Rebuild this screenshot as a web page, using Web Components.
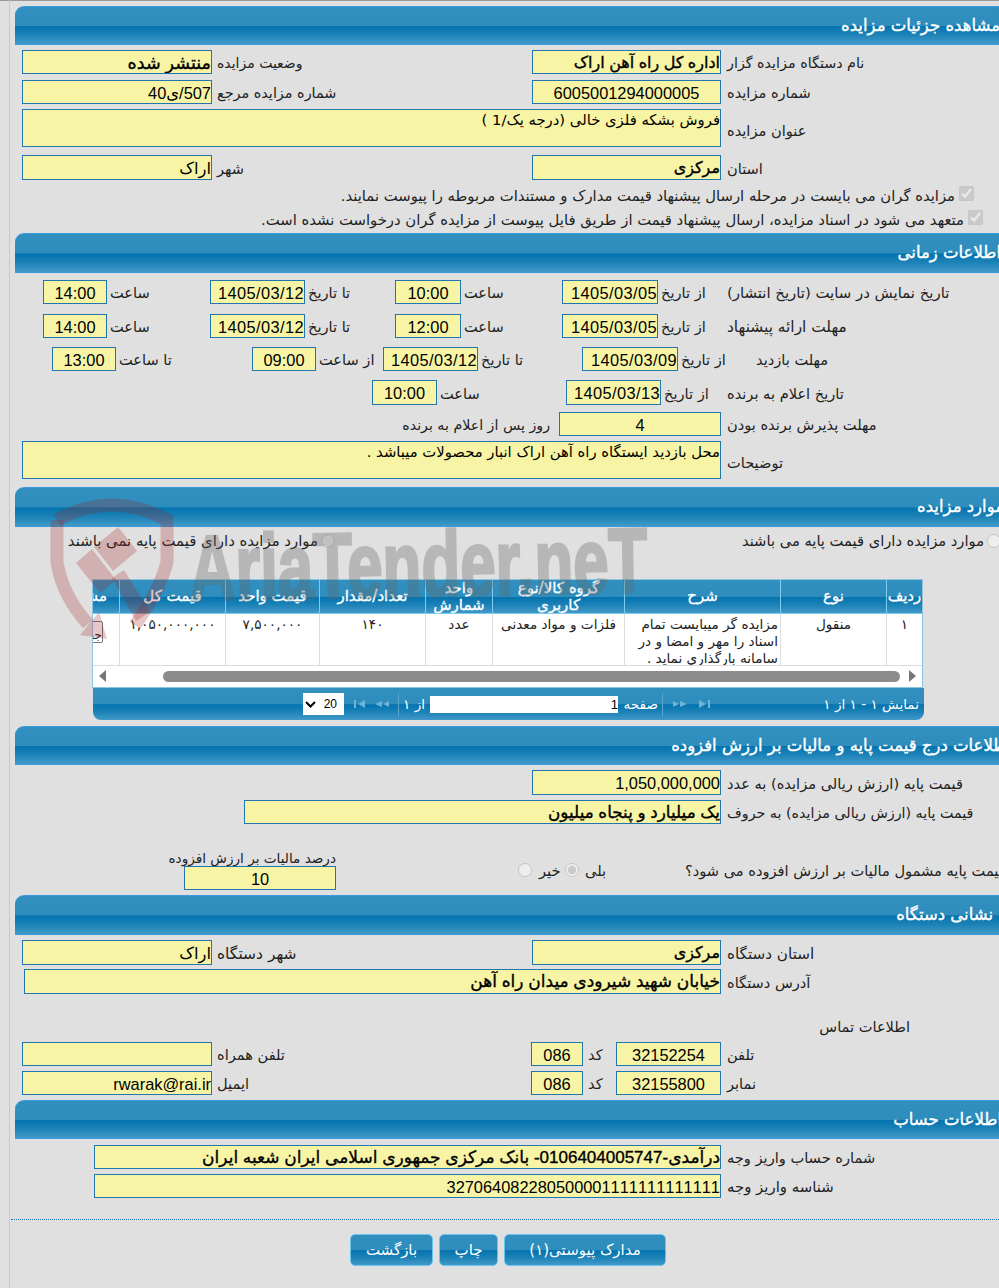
<!DOCTYPE html>
<html lang="fa">
<head>
<meta charset="utf-8">
<title>مشاهده جزئیات مزایده</title>
<style>
html, body { margin: 0; padding: 0; background: #e0e0e0; }
body { width: 999px; height: 1288px; overflow: hidden; }
</style>
</head>
<body>
<aria-sheet>
  <section-bar style="margin-top:5px;padding-right:15px">مشاهده جزئیات مزایده</section-bar>

  <field-row cols="294 189 320 190" h="24" style="margin-top:5px">
    <field-text style="font-size:14.3px">نام دستگاه مزایده گزار</field-text><field-box bold style="font-size:16px">اداره کل راه آهن اراک</field-box>
    <field-text near style="font-size:14px">وضعیت مزایده</field-text><field-box bold style="font-size:17.6px">منتشر شده</field-box>
  </field-row>
  <field-row cols="294 189 320 190" h="24" style="margin-top:6px">
    <field-text>شماره مزایده</field-text><field-box center>6005001294000005</field-box>
    <field-text near style="font-size:14.4px">شماره مزایده مرجع</field-text><field-box>507/ی40</field-box>
  </field-row>
  <field-row cols="294 699" h="38" style="margin-top:5px">
    <field-text low>عنوان مزایده</field-text><field-box top>فروش بشکه فلزی خالی (درجه یک/1 )</field-box>
  </field-row>
  <field-row cols="294 189 320 190" h="25" style="margin-top:8px">
    <field-text>استان</field-text><field-box bold style="font-size:16px">مرکزی</field-box>
    <field-text near>شهر</field-text><field-box>اراک</field-box>
  </field-row>
  <check-line inset="41" style="margin-top:6px">مزایده گران می بایست در مرحله ارسال پیشنهاد قیمت مدارک و مستندات مربوطه را پیوست نمایند.</check-line>
  <check-line inset="32" style="margin-top:4px">متعهد می شود در اسناد مزایده، ارسال پیشنهاد قیمت از طریق فایل پیوست از مزایده گران درخواست نشده است.</check-line>

  <section-bar style="margin-top:3px;height:40px;padding-right:14px">اطلاعات زمانی</section-bar>
  <field-row cols="294 63 96 101 66 90 95 103 64" h="24" style="margin-top:7px">
    <field-text style="font-size:14.9px">تاریخ نمایش در سایت (تاریخ انتشار)</field-text><field-text tight>از تاریخ</field-text><field-box date>1405/03/05</field-box>
    <field-text tight>ساعت</field-text><field-box center>10:00</field-box>
    <field-text tight>تا تاریخ</field-text><field-box date>1405/03/12</field-box>
    <field-text tight>ساعت</field-text><field-box center>14:00</field-box>
  </field-row>
  <field-row cols="294 63 96 101 66 90 95 103 64" h="24" style="margin-top:10px">
    <field-text style="font-size:15.4px">مهلت ارائه پیشنهاد</field-text><field-text tight>از تاریخ</field-text><field-box date>1405/03/05</field-box>
    <field-text tight>ساعت</field-text><field-box center>12:00</field-box>
    <field-text tight>تا تاریخ</field-text><field-box date>1405/03/12</field-box>
    <field-text tight>ساعت</field-text><field-box center>14:00</field-box>
  </field-row>
  <field-row cols="290 47 96 104 95 67 64 136 64" h="24" style="margin-top:9px">
    <field-text style="padding-left:31px">مهلت بازدید</field-text><field-text tight>از تاریخ</field-text><field-box date>1405/03/09</field-box>
    <field-text tight>تا تاریخ</field-text><field-box date>1405/03/12</field-box>
    <field-text tight>از ساعت</field-text><field-box center>09:00</field-box>
    <field-text tight>تا ساعت</field-text><field-box center>13:00</field-box>
  </field-row>
  <field-row cols="294 60 95 129 65" h="25" style="margin-top:9px">
    <field-text>تاریخ اعلام به برنده</field-text><field-text tight>از تاریخ</field-text><field-box date>1405/03/13</field-box>
    <field-text tight>ساعت</field-text><field-box center>10:00</field-box>
  </field-row>
  <field-row cols="294 162 340" h="24" style="margin-top:7px">
    <field-text>مهلت پذیرش برنده بودن</field-text><field-box center>4</field-box>
    <field-text start style="font-size:14.2px">روز پس از اعلام به برنده</field-text>
  </field-row>
  <field-row cols="294 699" h="38" style="margin-top:5px">
    <field-text low>توضیحات</field-text><field-box top>محل بازدید ایستگاه راه آهن اراک انبار محصولات میباشد .</field-box>
  </field-row>

  <section-bar style="margin-top:8px;height:40px;padding-right:11px">موارد مزایده</section-bar>
  <field-row cols="680 330" h="20" style="margin-top:4px">
    <choice-line type="radio" style="padding-right:14px">موارد مزایده دارای قیمت پایه می باشند</choice-line>
    <choice-line type="radio" style="font-size:14.9px">موارد مزایده دارای قیمت پایه نمی باشند</choice-line>
  </field-row>
  <lot-table style="margin-top:28px"></lot-table>

  <section-bar style="margin-top:6px;padding-right:4px">اطلاعات درج قیمت پایه و مالیات بر ارزش افزوده</section-bar>
  <field-row cols="294 189" h="25" style="margin-top:5px">
    <field-text>قیمت پایه (ارزش ریالی مزایده) به عدد</field-text><field-box>1,050,000,000</field-box>
  </field-row>
  <field-row cols="294 477" h="24" style="margin-top:5px">
    <field-text style="font-size:14.25px">قیمت پایه (ارزش ریالی مزایده) به حروف</field-text><field-box bold style="font-size:16.8px">یک میلیارد و پنجاه میلیون</field-box>
  </field-row>
  <field-row cols="405 31 15 32 16 180 152" h="40" style="margin-top:26px">
    <field-text style="padding-left:75px">قیمت پایه مشمول مالیات بر ارزش افزوده می شود؟</field-text>
    <field-text style="padding-left:6px">بلی</field-text><choice-line type="radio" checked></choice-line>
    <field-text style="padding-left:7px">خیر</field-text><choice-line type="radio"></choice-line>
    <span></span>
    <stacked-field caption="درصد مالیات بر ارزش افزوده">10</stacked-field>
  </field-row>

  <section-bar style="margin-top:5px;height:40px;padding-right:22px">نشانی دستگاه</section-bar>
  <field-row cols="294 189 320 190" h="25" style="margin-top:5px">
    <field-text style="font-size:15.2px">استان دستگاه</field-text><field-box bold style="font-size:16px">مرکزی</field-box>
    <field-text near style="font-size:15.5px">شهر دستگاه</field-text><field-box>اراک</field-box>
  </field-row>
  <field-row cols="294 697" h="25" style="margin-top:4px">
    <field-text>آدرس دستگاه</field-text><field-box bold style="font-size:17px">خیابان شهید شیرودی میدان راه آهن</field-box>
  </field-row>
  <field-row cols="105 120" h="20" style="margin-top:23px">
    <span></span><field-text start style="padding:0">اطلاعات تماس</field-text>
  </field-row>
  <field-row cols="294 105 33 52 319 190" h="24" style="margin-top:5px">
    <field-text>تلفن</field-text><field-box center>32152254</field-box>
    <field-text near>کد</field-text><field-box center>086</field-box>
    <field-text near>تلفن همراه</field-text><field-box></field-box>
  </field-row>
  <field-row cols="294 105 33 52 319 190" h="24" style="margin-top:5px">
    <field-text>نمابر</field-text><field-box center>32155800</field-box>
    <field-text near>کد</field-text><field-box center>086</field-box>
    <field-text near>ایمیل</field-text><field-box>rwarak@rai.ir</field-box>
  </field-row>

  <section-bar style="margin-top:5px;padding-right:13px">اطلاعات حساب</section-bar>
  <field-row cols="294 627" h="24" style="margin-top:6px">
    <field-text>شماره حساب واریز وجه</field-text><field-box bold style="font-size:17px">درآمدی-0106404005747- بانک مرکزی جمهوری اسلامی ایران شعبه ایران</field-box>
  </field-row>
  <field-row cols="294 627" h="24" style="margin-top:5px">
    <field-text style="font-size:14.9px">شناسه واریز وجه</field-text><field-box>327064082280500001111111111111</field-box>
  </field-row>

  <action-row style="margin-top:21px">
    <action-button style="width:162px">مدارک پیوستی(۱)</action-button>
    <action-button style="width:59px">چاپ</action-button>
    <action-button style="width:83px">بازگشت</action-button>
  </action-row>
</aria-sheet>

<script>
const barGradient = 'linear-gradient(to bottom,#3190bf 0,#2e8dbd 50%,#0473ae 52%,#1c82b7 75%,#4199c8 100%)';

// the whole page frame, wider than the window so the right edge gets cut like the original
class AriaSheet extends HTMLElement {
  constructor() {
    super();
    this.attachShadow({mode: 'open'}).innerHTML = `
    <style>
      :host { display: block; position: relative; width: 999px; height: 1288px; overflow: hidden;
        background: #e0e0e0; color: #111; font-family: "Liberation Sans", "DejaVu Sans", sans-serif; font-size: 14px; }
      .frame { box-sizing: border-box; width: 1000px; height: 1288px; margin-left: 15px; padding-top: 1px; direction: rtl; }
      .top { position: absolute; left: 0; top: 0; width: 999px; height: 1px; background: #999; }
      .side { position: absolute; left: 9px; top: 0; width: 1px; height: 1288px; background: #c8c8c8; }
      .mark { position: absolute; left: 40px; top: 495px; pointer-events: none; }
    </style>
    <div class="top"></div><div class="side"></div>
    <div class="frame"><slot></slot></div>
    <svg class="mark" width="620" height="165" viewBox="40 495 620 165">
      <g fill="none" stroke="#a02020" stroke-opacity=".25" stroke-width="13">
        <path d="M57 520 Q112 490 167 520 V562 Q160 590 135 625"/>
        <path d="M57 520 V562 Q62 595 88 624"/>
      </g>
      <g fill="#a02020" fill-opacity=".25">
        <path d="M80 635 L99 612 L107 639 Z"/>
        <path d="M76 563 L92 549 L116 580 L100 593 Z"/>
        <path d="M94 547 L118 527 L137 551 L113 571 Z"/>
        <path d="M112 578 L124 570 L150 612 L136 621 Z"/>
      </g>
      <text x="190" y="600" font-family="Liberation Sans, sans-serif" font-weight="700" font-size="92" textLength="458" lengthAdjust="spacingAndGlyphs" fill="#666" stroke="#666" stroke-width="3" opacity=".33" transform="rotate(-1 190 600)">AriaTender.neT</text>
    </svg>`;
  }
}
customElements.define('aria-sheet', AriaSheet);

class SectionBar extends HTMLElement {
  constructor() {
    super();
    this.attachShadow({mode: 'open'}).innerHTML = `
    <style>
      :host { display: block; box-sizing: border-box; height: 39px; padding: 0 6px 0 0; border-top: 1px solid #3a9ae0;
        border-bottom: 1px solid #3a9ae0; border-top-left-radius: 9px; background: ${barGradient};
        color: #fff; font: 16.5px/37px "DejaVu Sans", sans-serif; -webkit-text-stroke: .4px #fff; white-space: nowrap; }
    </style><slot></slot>`;
  }
}
customElements.define('section-bar', SectionBar);

class FieldRow extends HTMLElement {
  constructor() {
    super();
    this.attachShadow({mode: 'open'}).innerHTML = `
    <style>
      :host { display: grid; justify-content: start; direction: rtl; }
    </style><slot></slot>`;
  }
  connectedCallback() {
    const cols = this.getAttribute('cols').split(' ').map(w => w + 'px').join(' ');
    this.style.gridTemplateColumns = cols;
    this.style.height = this.getAttribute('h') + 'px';
  }
}
customElements.define('field-row', FieldRow);

class FieldBox extends HTMLElement {
  constructor() {
    super();
    this.attachShadow({mode: 'open'}).innerHTML = `
    <style>
      :host { display: block; box-sizing: border-box; height: 100%; border: 1px solid #2176ae; background: #f7f5a5;
        color: #000; font: 16.4px/24px "Liberation Sans", "DejaVu Sans", sans-serif; font-kerning: none; white-space: nowrap; overflow: hidden; }
      :host([bold]) { -webkit-text-stroke: .35px #000; }
      :host([center]) { text-align: center; }
      :host([date]) { letter-spacing: .4px; }
      :host([top]) { font-size: 14.8px; line-height: 20px; font-family: "DejaVu Sans", sans-serif; }
    </style><slot></slot>`;
  }
}
customElements.define('field-box', FieldBox);

class FieldText extends HTMLElement {
  constructor() {
    super();
    this.attachShadow({mode: 'open'}).innerHTML = `
    <style>
      :host { display: flex; align-items: center; box-sizing: border-box; height: 100%; padding: 2px 0 0 6px; justify-content: flex-end;
        color: #222; font: 14.6px/18px "DejaVu Sans", sans-serif; white-space: nowrap; }
      :host([tight]) { padding-left: 3px; }
      :host([near]) { padding-left: 5px; }
      :host([low]) { padding-top: 6px; }
      :host([start]) { justify-content: flex-start; padding: 2px 9px 0 0; }
    </style><slot></slot>`;
  }
}
customElements.define('field-text', FieldText);

// disabled radio or checkbox with an optional caption
class ChoiceLine extends HTMLElement {
  constructor() {
    super();
    this.attachShadow({mode: 'open'}).innerHTML = `
    <style>
      :host { display: flex; align-items: center; height: 100%; color: #222; font: 14.7px/18px "DejaVu Sans", sans-serif; white-space: nowrap; }
      input { margin: 0 0 0 3px; width: 14px; height: 14px; flex: none; }
    </style><input disabled><slot></slot>`;
  }
  connectedCallback() {
    const box = this.shadowRoot.querySelector('input');
    box.type = this.getAttribute('type') || 'checkbox';
    box.checked = this.hasAttribute('checked');
  }
}
customElements.define('choice-line', ChoiceLine);

class CheckLine extends HTMLElement {
  constructor() {
    super();
    this.attachShadow({mode: 'open'}).innerHTML = `
    <style>
      :host { display: flex; align-items: flex-start; height: 20px; color: #222; font: 14.8px/20px "DejaVu Sans", sans-serif; white-space: nowrap; }
      input { margin: 0 0 0 4px; width: 15px; height: 15px; flex: none; }
    </style><input type="checkbox" checked disabled><slot></slot>`;
  }
  connectedCallback() {
    this.style.paddingRight = this.getAttribute('inset') + 'px';
  }
}
customElements.define('check-line', CheckLine);

class StackedField extends HTMLElement {
  constructor() {
    super();
    this.attachShadow({mode: 'open'}).innerHTML = `
    <style>
      :host { display: block; height: 40px; white-space: nowrap; font: 13.6px/16px "DejaVu Sans", sans-serif; color: #222; }
      .cap { height: 16px; }
      .box { box-sizing: border-box; height: 24px; border: 1px solid #2176ae; background: #f7f5a5; color: #000;
        text-align: center; font: 16.4px/24px "Liberation Sans", sans-serif; }
    </style><div class="cap"></div><div class="box"><slot></slot></div>`;
  }
  connectedCallback() {
    this.shadowRoot.querySelector('.cap').textContent = this.getAttribute('caption');
  }
}
customElements.define('stacked-field', StackedField);

const lotHeads = ['ردیف', 'نوع', 'شرح', 'گروه کالا/نوع کاربری', 'واحد شمارش', 'تعداد/مقدار', 'قیمت واحد', 'قیمت کل', 'مشاهده'];
const lotCells = ['۱', 'منقول', 'مزایده گر میبایست تمام اسناد را مهر و امضا و در سامانه بارگذاری نماید .', 'فلزات و مواد معدنی', 'عدد', '۱۴۰', '۷,۵۰۰,۰۰۰', '۱,۰۵۰,۰۰۰,۰۰۰', ''];

class LotTable extends HTMLElement {
  constructor() {
    super();
    const heads = lotHeads.map(h => `<div class="h">${h}</div>`).join('');
    const cells = lotCells.map((c, i) => {
      let cls = 'c';
      if (i == 2) cls += ' wrap';
      if (i == 6 || i == 7) cls += ' num';
      return `<div class="${cls}">${c || '<span class="btn">جزئیات</span>'}</div>`;
    }).join('');
    this.attachShadow({mode: 'open'}).innerHTML = `
    <style>
      :host { display: block; width: 831px; margin-right: 92px; font-family: "DejaVu Sans", sans-serif; direction: rtl; }
      .wrap-table { box-sizing: border-box; width: 831px; height: 109px; border: 1px solid #8fc4e0; overflow: hidden; background: #fff; }
      .grid { display: grid; width: 829px; grid-template-columns: 36px 106px 156px 132px 67px 106px 94px 106px 26px; grid-template-rows: 34px 52px; }
      .h { display: flex; align-items: center; justify-content: center; box-sizing: border-box; padding: 0 2px; text-align: center;
        background: ${barGradient}; color: #fff; font: 15px/17px "DejaVu Sans", sans-serif; -webkit-text-stroke: .35px #fff; border-left: 1px solid #7fcdee; border-bottom: 1px solid #7fcdee; overflow: hidden; white-space: normal; }
      .h:nth-child(9) { border-left: 0; justify-content: flex-start; white-space: nowrap; padding: 0 12px 0 0; }
      .c { box-sizing: border-box; padding-top: 2px; text-align: center; color: #222; font: 13.6px/17px "DejaVu Sans", sans-serif;
        border-left: 1px solid #ddd; border-bottom: 1px solid #ddd; background: #fff; overflow: hidden; }
      .c.wrap { padding: 2px 2px 0 2px; text-align: right; }
      .c.num { letter-spacing: .4px; }
      .c:last-child { border-left: 0; }
      .btn { display: block; box-sizing: border-box; width: 60px; height: 22px; margin: 5px 16px 0 0; border: 1px solid #777; border-radius: 2px; font-size: 12px; line-height: 26px; text-align: right; white-space: nowrap; background: #fff; }
      .scroll { display: flex; align-items: center; height: 20px; background: #fff; }
      .arr { width: 0; height: 0; border-top: 6px solid transparent; border-bottom: 6px solid transparent; flex: none; }
      .arr.r { margin: 0 6px 0 9px; border-left: 7px solid #777; }
      .arr.l { margin: 0 auto 0 6px; border-right: 7px solid #777; }
      .thumb { width: 737px; height: 11px; border-radius: 6px; background: #8c8c8c; flex: none; }
      .pager { box-sizing: border-box; display: flex; align-items: center; width: 831px; height: 32px; margin-right: -1px; padding-right: 5px;
        background: ${barGradient}; border-radius: 0 0 8px 8px; color: #fff; font: 13.6px/17px "DejaVu Sans", sans-serif; white-space: nowrap; }
      .sep { width: 1px; height: 23px; background: #5aa5cc; flex: none; }
      .ico { flex: none; display: block; }
      .pg { box-sizing: border-box; width: 188px; height: 17px; background: #fff; color: #000; text-align: right; font: 13px/17px "Liberation Sans", sans-serif; flex: none; }
      .sel { box-sizing: border-box; display: flex; align-items: center; justify-content: space-between; width: 41px; height: 22px; padding: 0 7px 0 2px; background: #fff; color: #000; font: 12px/22px "Liberation Sans", sans-serif; flex: none; direction: ltr; }
    </style>
    <div class="wrap-table">
      <div class="grid">${heads}${cells}</div>
      <div class="scroll"><div class="arr r"></div><div class="thumb"></div><div class="arr l"></div></div>
    </div>
    <div class="pager">
      <span style="width:207px;flex:none">نمایش ۱ - ۱ از ۱</span>
      <svg class="ico" width="14" height="10" viewBox="0 0 14 10" fill="#6fb3d6"><path d="M1 1l7 4-7 4zM10 1h2v8h-2z"/></svg>
      <svg class="ico" width="16" height="10" style="margin-right:10px" viewBox="0 0 16 10" fill="#6fb3d6"><path d="M1 2l6 3-6 3zM8 2l7 3-7 3z"/></svg>
      <div class="sep" style="margin-right:9px"></div>
      <span style="margin-right:4px;width:35px;flex:none">صفحه</span>
      <div class="pg" style="margin-right:5px">1</div>
      <span style="margin-right:5px;width:20px;flex:none">از ۱</span>
      <div class="sep" style="margin-right:6px"></div>
      <svg class="ico" width="16" height="10" style="margin-right:8px" viewBox="0 0 16 10" fill="#6fb3d6"><path d="M15 2L9 5l6 3zM8 2L1 5l7 3z"/></svg>
      <svg class="ico" width="14" height="10" style="margin-right:8px" viewBox="0 0 14 10" fill="#6fb3d6"><path d="M13 1L6 5l7 4zM2 1h2v8H2z"/></svg>
      <div class="sel" style="margin-right:8px"><svg width="11" height="7" viewBox="0 0 11 7"><path d="M1 1l4.5 4.5L10 1" fill="none" stroke="#000" stroke-width="2"/></svg><span>20</span></div>
    </div>`;
  }
}
customElements.define('lot-table', LotTable);

class ActionRow extends HTMLElement {
  constructor() {
    super();
    this.attachShadow({mode: 'open'}).innerHTML = `
    <style>
      :host { display: flex; justify-content: flex-start; gap: 6px; box-sizing: border-box; height: 47px; margin-left: -4px; width: 1004px;
        padding: 14px 349px 0 0; border-top: 1px dotted #2176ae; direction: rtl; }
    </style><slot></slot>`;
  }
}
customElements.define('action-row', ActionRow);

class ActionButton extends HTMLElement {
  constructor() {
    super();
    this.attachShadow({mode: 'open'}).innerHTML = `
    <style>
      :host { display: block; box-sizing: border-box; height: 32px; border: 1px solid #66c4ee; border-radius: 5px;
        background: ${barGradient}; color: #fff; font: 15px/30px "DejaVu Sans", sans-serif; white-space: nowrap; text-align: center; }
    </style><slot></slot>`;
  }
}
customElements.define('action-button', ActionButton);
</script>
</body>
</html>
